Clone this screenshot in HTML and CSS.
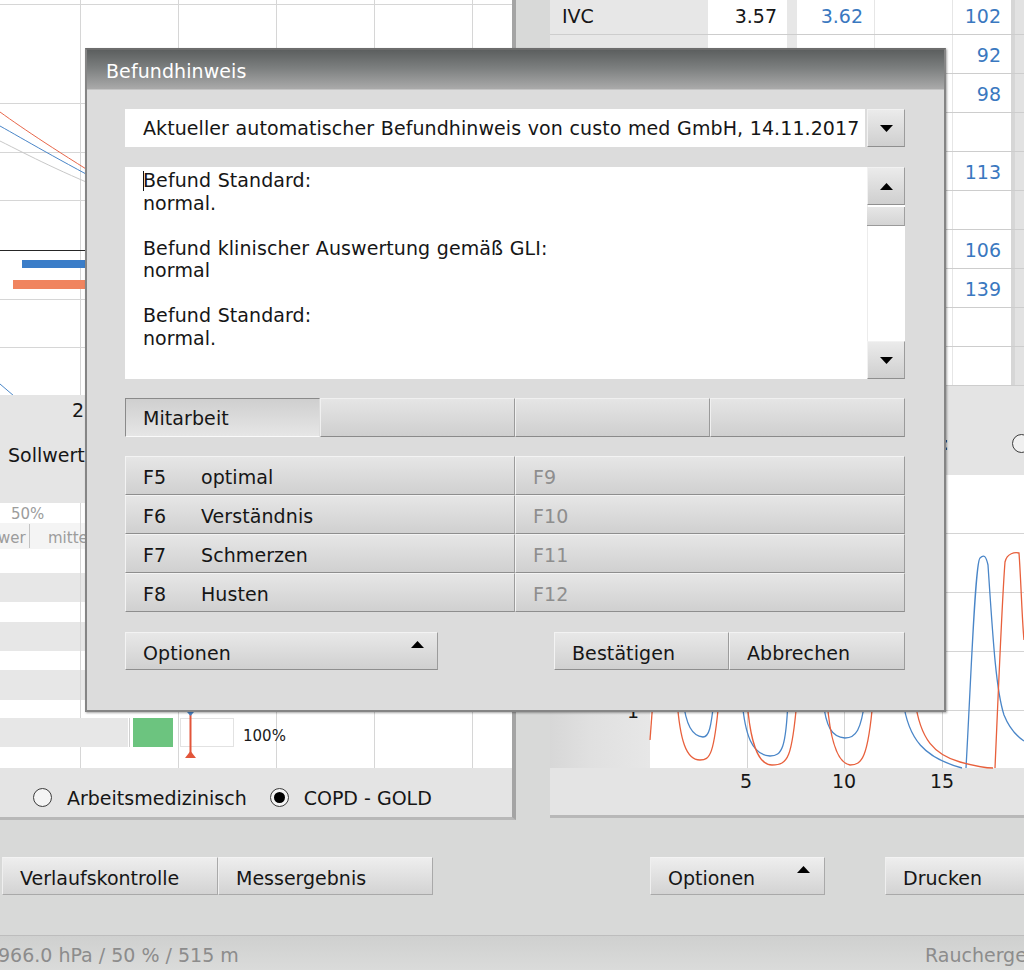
FILE: index.html
```html
<!DOCTYPE html>
<html lang="de">
<head>
<meta charset="utf-8">
<title>Befundhinweis</title>
<link rel="stylesheet" href="styles.css">
</head>
<body>
<div class="app">
  <div class="workspace">
    <section class="left-panel">
      <svg class="flow-chart" width="512" height="395" viewBox="0 0 512 395">
        <rect width="512" height="395" fill="#ffffff"/>
        <path d="M80.5 0V395M178.5 0V395M276.5 0V395M374.5 0V395M472.5 0V395M0 4.5H512M0 103.5H512M0 152.5H512M0 200.5H512M0 299.5H512M0 347.5H512" stroke="#d6d6d6" fill="none"/>
        <path d="M0 250.5H512" stroke="#262626" fill="none"/>
        <path d="M0 141 C 30 156, 60 172, 120 196" stroke="#c8c8c8" fill="none"/>
        <path d="M0 112 C 25 130, 55 150, 120 190" stroke="#e8674a" fill="none"/>
        <path d="M0 126 C 25 140, 55 158, 120 192" stroke="#4a86c8" fill="none"/>
        <path d="M0 384 C 5 388, 9 392, 14 396" stroke="#4a86c8" fill="none"/>
        <rect x="22" y="260" width="490" height="8" fill="#3b7dc8"/>
        <rect x="13" y="280" width="499" height="9" fill="#f0845f"/>
      </svg>
      <div class="sollwert-info">
        <div class="axis-num">2</div>
        <div class="sollwert-label">Sollwert</div>
      </div>
      <svg class="gold-bars" width="512" height="265" viewBox="0 503 512 265">
        <rect x="0" y="503" width="512" height="265" fill="#ffffff"/>
        <rect x="0" y="523" width="512" height="26" fill="#f4f4f4"/>
        <rect x="0" y="573" width="512" height="29" fill="#e7e7e7"/>
        <rect x="0" y="622" width="512" height="29" fill="#e7e7e7"/>
        <rect x="0" y="670" width="512" height="30" fill="#e7e7e7"/>
        <path d="M80.5 503V768M178.5 503V768M276.5 503V768M374.5 503V768M472.5 503V768" stroke="#d6d6d6" fill="none"/>
        <path d="M29.5 524V548" stroke="#c4c4c4"/>
        <text x="11" y="519" class="bar-note">50%</text>
        <text x="-2" y="543" class="bar-note">wer</text>
        <text x="48" y="543" class="bar-note">mittel</text>
        <rect x="0" y="718" width="128" height="29" fill="#e7e7e7"/>
        <path d="M129.5 718V747" stroke="#cfcfcf"/>
        <rect x="133" y="718" width="40" height="29" fill="#6cc47f"/>
        <rect x="180.5" y="718.5" width="53" height="28" fill="#ffffff" stroke="#e2e2e2"/>
        <path d="M190.5 712V753" stroke="#e2553a" stroke-width="2"/>
        <path d="M185 758H196L190.5 751Z" fill="#e2553a"/>
        <path d="M187 712H194L190.5 716Z" fill="#4a86c8"/>
        <text x="243" y="741" class="bar-value">100%</text>
      </svg>
      <div class="radio-row">
        <span class="radio"></span><span class="radio-label">Arbeitsmedizinisch</span>
        <span class="radio checked"></span><span class="radio-label">COPD - GOLD</span>
      </div>
    </section>

    <section class="right-panel">
      <div class="values-table">
        <div class="vrow"><span class="c-label">IVC</span><span class="c-val">3.57</span><span class="c-gap"></span><span class="c-pred">3.62</span><span class="c-lln"></span><span class="c-pct">102</span><span class="c-tail"></span></div>
        <div class="vrow"><span class="c-label">FVC</span><span class="c-val">3.57</span><span class="c-gap"></span><span class="c-pred">3.88</span><span class="c-lln">3.08</span><span class="c-pct">92</span><span class="c-tail"></span></div>
        <div class="vrow"><span class="c-label">FEV1</span><span class="c-val">3.12</span><span class="c-gap"></span><span class="c-pred">3.18</span><span class="c-lln">2.52</span><span class="c-pct">98</span><span class="c-tail"></span></div>
        <div class="vrow"><span class="c-label"></span><span class="c-val"></span><span class="c-gap"></span><span class="c-pred"></span><span class="c-lln"></span><span class="c-pct"></span><span class="c-tail"></span></div>
        <div class="vrow"><span class="c-label">FEV1/FVC</span><span class="c-val">87.4</span><span class="c-gap"></span><span class="c-pred">77.5</span><span class="c-lln">66.4</span><span class="c-pct">113</span><span class="c-tail"></span></div>
        <div class="vrow"><span class="c-label"></span><span class="c-val"></span><span class="c-gap"></span><span class="c-pred"></span><span class="c-lln"></span><span class="c-pct"></span><span class="c-tail"></span></div>
        <div class="vrow"><span class="c-label">PEF</span><span class="c-val">7.87</span><span class="c-gap"></span><span class="c-pred">7.43</span><span class="c-lln"></span><span class="c-pct">106</span><span class="c-tail"></span></div>
        <div class="vrow"><span class="c-label">MEF50</span><span class="c-val">5.41</span><span class="c-gap"></span><span class="c-pred">3.89</span><span class="c-lln"></span><span class="c-pct">139</span><span class="c-tail"></span></div>
        <div class="vrow"><span class="c-label"></span><span class="c-val"></span><span class="c-gap"></span><span class="c-pred"></span><span class="c-lln"></span><span class="c-pct"></span><span class="c-tail"></span></div>
        <div class="vrow"><span class="c-label"></span><span class="c-val"></span><span class="c-gap"></span><span class="c-pred"></span><span class="c-lln"></span><span class="c-pct"></span><span class="c-tail"></span></div>
      </div>
      <div class="display-row">
        <span class="display-label">Darstellung:</span><span class="radio small-gap"></span>
      </div>
      <svg class="volume-chart" width="474" height="340" viewBox="550 475 474 340">
        <defs>
          <linearGradient id="axisShade" x1="0" x2="1" y1="0" y2="0">
            <stop offset="0" stop-color="#d7d7d7"/>
            <stop offset="0.4" stop-color="#e0e0e0"/>
            <stop offset="1" stop-color="#e7e7e7"/>
          </linearGradient>
        </defs>
        <rect x="550" y="475" width="100" height="293" fill="url(#axisShade)"/>
        <rect x="650" y="475" width="374" height="293" fill="#ffffff"/>
        <rect x="550" y="768" width="474" height="47" fill="#e4e4e4"/>
        <path d="M650 533.5H1024M650 592.5H1024M650 651.5H1024M650 710.5H1024M747.5 475V768M844.5 475V768M942.5 475V768" stroke="#d4d4d4" fill="none"/>
        <g fill="none" stroke="#4a86c8" stroke-width="1.3">
          <path d="M683 700 C 686 725, 692 736, 703 737 C 709 737, 711 728, 714 700"/>
          <path d="M742 700 C 745 735, 752 755, 770 756 C 782 756, 786 748, 788 700"/>
          <path d="M823 700 C 826 728, 832 737, 845 738 C 856 738, 861 730, 865 700"/>
          <path d="M903 700 C 908 740, 925 758, 962 768"/>
          <path d="M966 768 C 971 680, 975 562, 980 558 C 984 554, 986 556, 988 565 C 993 640, 996 690, 1004 715 C 1010 730, 1018 737, 1024 741"/>
        </g>
        <g fill="none" stroke="#e8603c" stroke-width="1.3">
          <path d="M650 740 C 651 725, 652 712, 653 700"/>
          <path d="M677 700 C 680 740, 686 760, 700 760 C 710 760, 714 755, 719 700"/>
          <path d="M747 700 C 750 740, 757 765, 772 765 C 788 765, 792 758, 797 700"/>
          <path d="M827 700 C 830 740, 837 763, 850 765 C 862 765, 868 758, 873 700"/>
          <path d="M915 700 C 920 740, 935 755, 960 762 C 975 766, 988 768, 993 768"/>
          <path d="M995 768 C 998 700, 1002 600, 1005 562 C 1007 553, 1015 552, 1019 553 C 1021 580, 1022 620, 1024 640"/>
        </g>
        <text x="633" y="718" class="axis-label" text-anchor="middle">1</text>
        <text x="746" y="788" class="axis-label" text-anchor="middle">5</text>
        <text x="844" y="788" class="axis-label" text-anchor="middle">10</text>
        <text x="942" y="788" class="axis-label" text-anchor="middle">15</text>
      </svg>
    </section>
  </div>

  <div class="actions">
    <div class="btn btn-verlauf">Verlaufskontrolle</div>
    <div class="btn btn-mess">Messergebnis</div>
    <div class="btn btn-optionen">Optionen<svg class="tri-up" width="13" height="7" viewBox="0 0 13 7"><path d="M0 7H13L6.5 0Z"/></svg></div>
    <div class="btn btn-drucken">Drucken</div>
  </div>

  <div class="status">
    <span class="status-left">966.0 hPa / 50 % / 515 m</span>
    <span class="status-right">Rauchergewohnheiten</span>
  </div>
</div>

<div class="dialog">
  <div class="dialog-title">Befundhinweis</div>
  <div class="dialog-body">
    <div class="combo">
      <div class="combo-field">Aktueller automatischer Befundhinweis von custo med GmbH, 14.11.2017</div>
      <div class="sq-btn"><svg class="tri" width="13" height="7" viewBox="0 0 13 7"><path d="M0 0H13L6.5 7Z"/></svg></div>
    </div>
    <div class="memo">
      <div class="memo-text"><span class="caret"></span>Befund Standard:<br>normal.<br><br>Befund klinischer Auswertung gemäß GLI:<br>normal<br><br>Befund Standard:<br>normal.</div>
      <div class="scrollbar">
        <div class="sq-btn"><svg class="tri" width="13" height="7" viewBox="0 0 13 7"><path d="M0 7H13L6.5 0Z"/></svg></div>
        <div class="thumb"></div>
        <div class="track"></div>
        <div class="sq-btn"><svg class="tri" width="13" height="7" viewBox="0 0 13 7"><path d="M0 0H13L6.5 7Z"/></svg></div>
      </div>
    </div>
    <div class="tabs">
      <div class="tab active">Mitarbeit</div>
      <div class="tab"></div>
      <div class="tab"></div>
      <div class="tab"></div>
    </div>
    <div class="fkeys">
      <div class="fkey"><span class="key">F5</span>optimal</div>
      <div class="fkey off"><span class="key">F9</span></div>
      <div class="fkey"><span class="key">F6</span>Verständnis</div>
      <div class="fkey off"><span class="key">F10</span></div>
      <div class="fkey"><span class="key">F7</span>Schmerzen</div>
      <div class="fkey off"><span class="key">F11</span></div>
      <div class="fkey"><span class="key">F8</span>Husten</div>
      <div class="fkey off"><span class="key">F12</span></div>
    </div>
    <div class="dialog-actions">
      <div class="dbtn dbtn-optionen">Optionen<svg class="tri-up" width="13" height="7" viewBox="0 0 13 7"><path d="M0 7H13L6.5 0Z"/></svg></div>
      <div class="dbtn dbtn-confirm">Bestätigen</div>
      <div class="dbtn dbtn-cancel">Abbrechen</div>
    </div>
  </div>
</div>
</body>
</html>
```

FILE: styles.css
```css
* { box-sizing: border-box; }

html, body { margin: 0; padding: 0; }

body {
  width: 1024px;
  height: 970px;
  overflow: hidden;
  position: relative;
  background: #d8d9d8;
  font-family: "DejaVu Sans", Verdana, sans-serif;
  font-size: 19px;
  color: #161616;
}

.app {
  display: flex;
  flex-direction: column;
  height: 970px;
}

.workspace {
  display: flex;
  align-items: flex-start;
  height: 820px;
}

/* ---------- left panel ---------- */
.left-panel {
  width: 516px;
  height: 820px;
  display: flex;
  flex-direction: column;
  border-right: 4px solid #a4a4a4;
  border-bottom: 3px solid #b8b8b8;
  background: #e5e5e5;
  overflow: hidden;
}

.flow-chart, .gold-bars, .volume-chart { display: block; flex: none; }

.sollwert-info {
  height: 108px;
  background: #e5e5e5;
}

.axis-num {
  height: 30px;
  line-height: 30px;
  padding-left: 72px;
}

.sollwert-label {
  margin-top: 15px;
  line-height: 30px;
  padding-left: 8px;
}

.bar-note {
  font-family: "DejaVu Sans", sans-serif;
  font-size: 15px;
  fill: #9c9c9c;
}

.bar-value {
  font-family: "DejaVu Sans", sans-serif;
  font-size: 15px;
  fill: #1a1a1a;
}

.radio-row {
  height: 49px;
  padding-top: 10px;
  display: flex;
  align-items: center;
  background: #e4e4e4;
}

.radio {
  flex: none;
  width: 19px;
  height: 19px;
  border: 1px solid #3c3c3c;
  border-radius: 50%;
  background: #f4f4f4;
  position: relative;
}

.radio-row .radio:first-child { margin-left: 33px; }
.radio-row .radio.checked { margin-left: 23px; }

.radio.checked::after {
  content: "";
  position: absolute;
  left: 3px;
  top: 3px;
  width: 11px;
  height: 11px;
  border-radius: 50%;
  background: #000;
}

.radio-label { margin-left: 15px; }

/* ---------- right panel ---------- */
.right-panel {
  width: 474px;
  height: 818px;
  margin-left: 34px;
  display: flex;
  flex-direction: column;
  border-bottom: 3px solid #b8b8b8;
  background: #e4e4e4;
  overflow: hidden;
}

.values-table { margin-top: -4px; flex: none; }

.vrow {
  display: flex;
  height: 39px;
  border-bottom: 1px solid #cdcdcd;
  line-height: 38px;
  padding-top: 1px;
  white-space: nowrap;
}

.vrow span { display: block; flex: none; margin-top: -1px; padding-top: 1px; }

.c-label { width: 158px; background: #e7e7e7; padding-left: 12px; }
.c-val { width: 79px; background: #fff; text-align: right; padding-right: 10px; }
.c-gap { width: 10px; background: #e7e7e7; }
.c-pred { width: 77px; background: #fff; text-align: right; padding-right: 11px; color: #3a78c0; }
.c-lln { width: 78px; background: #fff; text-align: right; padding-right: 12px; color: #3a78c0; border-left: 1px solid #e6e6e6; }
.c-pct { width: 59px; background: #fff; text-align: right; padding-right: 10px; color: #3a78c0; border-left: 1px solid #e6e6e6; }
.c-tail { width: 13px; background: #e2e2e2; border-left: 4px solid #d6d6d6; }

.display-row {
  height: 89px;
  flex: none;
  padding-top: 25px;
  display: flex;
  justify-content: flex-end;
  align-items: center;
}

.display-row .radio {
  margin-left: 63px;
  margin-right: -7px;
  background: #f0f0f0;
}

.axis-label {
  font-family: "DejaVu Sans", sans-serif;
  font-size: 19px;
  fill: #161616;
}

/* ---------- bottom actions ---------- */
.actions {
  height: 115px;
  padding-top: 37px;
  display: flex;
  align-items: flex-start;
}

.btn {
  flex: none;
  height: 38px;
  line-height: 36px;
  padding-top: 2px;
  padding-left: 17px;
  background: linear-gradient(#eeeeee, #d3d3d3);
  border: 1px solid #a9a9a9;
  border-top-color: #f3f3f3;
  border-left-color: #efefef;
  position: relative;
  white-space: nowrap;
}

.btn-verlauf { margin-left: 2px; width: 216px; }
.btn-mess { width: 215px; }
.btn-optionen { margin-left: 217px; width: 175px; }
.btn-drucken { margin-left: 60px; width: 160px; }

.tri-up {
  position: absolute;
  right: 14px;
  top: 8px;
  fill: #000;
}

.status {
  height: 35px;
  padding-top: 3px;
  border-top: 1px solid #bdbdbd;
  background: linear-gradient(#cfd0cf, #dadbda);
  display: flex;
  justify-content: space-between;
  align-items: center;
  color: #8c8c8c;
  white-space: nowrap;
  overflow: hidden;
}

.status-left { margin-left: -2px; }
.status-right { margin-left: auto; width: 99px; overflow: hidden; }

/* ---------- dialog ---------- */
.dialog {
  position: absolute;
  left: 85px;
  top: 48px;
  width: 861px;
  height: 664px;
  border: 2px solid #858585;
  border-top-color: #6d6d6d;
  background: #dcdcdc;
  box-shadow: 1px 1px 2px rgba(0, 0, 0, 0.35);
  letter-spacing: 0.08px;
  word-spacing: 0.5px;
}

.dialog-title {
  height: 40px;
  line-height: 40px;
  padding-top: 1px;
  padding-left: 19px;
  color: #ffffff;
  background: linear-gradient(#5c5f5f, #7b7e7e 45%, #aaaaaa);
  border-bottom: 1px solid #c4c4c4;
}

.dialog-body {
  padding: 19px 39px 0 38px;
}

.combo {
  display: flex;
  gap: 2px;
  height: 38px;
}

.combo-field {
  flex: 1;
  background: #ffffff;
  line-height: 38px;
  padding-left: 18px;
  white-space: nowrap;
  overflow: hidden;
}

.sq-btn {
  flex: none;
  width: 38px;
  height: 38px;
  display: flex;
  align-items: center;
  justify-content: center;
  background: linear-gradient(#ebebeb, #cfcfcf);
  border: 1px solid #f2f2f2;
  border-right-color: #9c9c9c;
  border-bottom-color: #8f8f8f;
}

.tri { fill: #000; display: block; }

.memo {
  margin-top: 20px;
  height: 212px;
  display: flex;
  background: #ffffff;
}

.memo-text {
  flex: 1;
  padding: 2px 0 0 18px;
  line-height: 22.5px;
  white-space: nowrap;
  overflow: hidden;
}

.caret {
  display: inline-block;
  width: 1px;
  height: 20px;
  background: #111;
  vertical-align: -4px;
  margin-right: -1px;
}

.scrollbar {
  flex: none;
  width: 38px;
  display: flex;
  flex-direction: column;
  border-left: 1px solid #ececec;
}

.scrollbar .sq-btn { width: 38px; margin-left: -1px; }

.thumb {
  height: 19px;
  margin-top: 2px;
  margin-left: -1px;
  background: linear-gradient(#e6e6e6, #d4d4d4);
  border-bottom: 1px solid #9a9a9a;
  border-right: 1px solid #a0a0a0;
}

.track { flex: 1; }

.tabs {
  margin-top: 19px;
  height: 38px;
  display: grid;
  grid-template-columns: repeat(4, 1fr);
}

.tab {
  line-height: 36px;
  padding-top: 1px;
  padding-left: 17px;
  background: linear-gradient(#e5e5e5, #cfcfcf);
  border: 1px solid #f0f0f0;
  border-right-color: #9a9a9a;
  border-bottom-color: #8a8a8a;
}

.tab.active {
  background: linear-gradient(#cfcfcf, #e6e6e6);
  border-color: #8a8a8a #dcdcdc #fafafa #8a8a8a;
}

.fkeys {
  margin-top: 20px;
  display: grid;
  grid-template-columns: 390px 390px;
  grid-auto-rows: 39px;
}

.fkey {
  line-height: 37px;
  padding-top: 2px;
  padding-left: 17px;
  background: linear-gradient(#e6e6e6, #d0d0d0);
  border: 1px solid #f3f3f3;
  border-right-color: #9c9c9c;
  border-bottom-color: #8e8e8e;
  white-space: nowrap;
}

.key {
  display: inline-block;
  width: 58px;
}

.fkey.off { color: #8e8e8e; }

.dialog-actions {
  margin-top: 20px;
  display: flex;
  height: 38px;
}

.dbtn {
  flex: none;
  height: 38px;
  line-height: 36px;
  padding-top: 2px;
  padding-left: 17px;
  position: relative;
  background: linear-gradient(#e8e8e8, #d0d0d0);
  border: 1px solid #f3f3f3;
  border-right-color: #9c9c9c;
  border-bottom-color: #8e8e8e;
  white-space: nowrap;
}

.dbtn-optionen { width: 313px; }
.dbtn-optionen .tri-up { right: 13px; top: 8px; }
.dbtn-confirm { width: 175px; margin-left: auto; }
.dbtn-cancel { width: 176px; }
```
